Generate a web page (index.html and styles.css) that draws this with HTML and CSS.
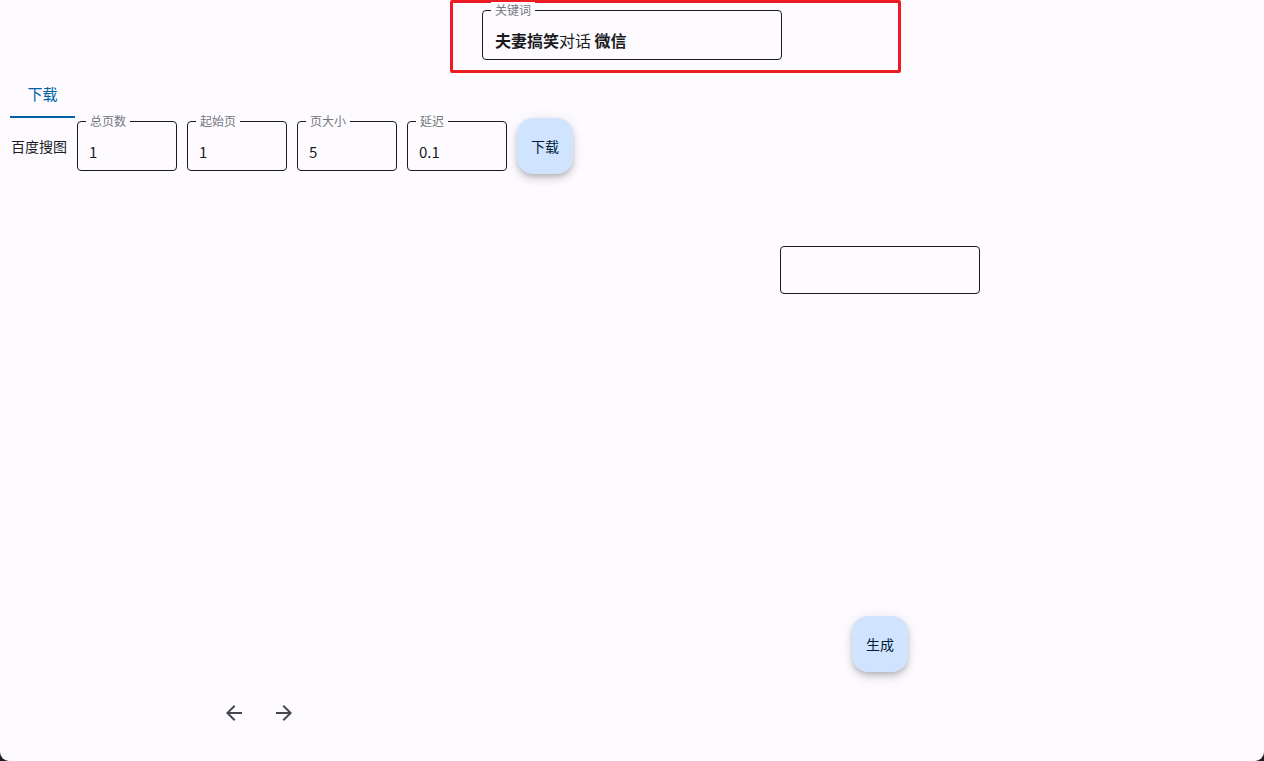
FILE: index.html
```html
<!DOCTYPE html>
<html lang="zh">
<head>
<meta charset="utf-8">
<title>下载</title>
<link rel="stylesheet" href="styles.css">
</head>
<body>
<div class="app">
  <header class="top">
    <div class="highlight">
      <div class="field field-keyword">
        <span class="field-label">关键词</span>
        <span class="field-value"><b>夫妻搞笑</b>对话 <b>微信</b></span>
      </div>
    </div>
  </header>
  <nav class="tabs">
    <div class="tab active">下载</div>
  </nav>
  <section class="row">
    <span class="row-label">百度搜图</span>
    <div class="field field-small">
      <span class="field-label">总页数</span>
      <span class="field-value">1</span>
    </div>
    <div class="field field-small">
      <span class="field-label">起始页</span>
      <span class="field-value">1</span>
    </div>
    <div class="field field-small">
      <span class="field-label">页大小</span>
      <span class="field-value">5</span>
    </div>
    <div class="field field-small">
      <span class="field-label">延迟</span>
      <span class="field-value">0.1</span>
    </div>
    <button class="fab fab-row">下载</button>
  </section>
  <div class="empty-wrap">
    <div class="field field-empty"></div>
  </div>
  <div class="gen-wrap">
    <button class="fab">生成</button>
  </div>
  <div class="nav-arrows">
    <svg class="arrow" viewBox="0 0 24 24" width="24" height="24"><path d="M20 11H7.83l5.59-5.59L12 4l-8 8 8 8 1.41-1.41L7.83 13H20v-2z"/></svg>
    <svg class="arrow" viewBox="0 0 24 24" width="24" height="24"><path d="M12 4l-1.41 1.41L16.17 11H4v2h12.17l-5.58 5.59L12 20l8-8z"/></svg>
  </div>
</div>
</body>
</html>
```

FILE: styles.css
```css
html {
  background: #1c1c1c;
  margin: 0;
  padding: 0;
}
body {
  margin: 0;
  font-family: "Noto Sans CJK SC", "Noto Sans", sans-serif;
  color: #1b1b1f;
}
.app {
  width: 1264px;
  height: 761px;
  background: #fdfbff;
  border-radius: 0 0 9px 9px;
  overflow: hidden;
  display: flex;
  flex-direction: column;
}
.top {
  height: 73px;
  display: flex;
}
.highlight {
  margin-left: 450px;
  width: 451px;
  height: 73px;
  box-sizing: border-box;
  border: 3px solid #ec1c24;
  border-radius: 2px;
  padding: 7px 0 0 29px;
}
.field {
  position: relative;
  box-sizing: border-box;
  border: 1px solid #1b1b1f;
  border-radius: 4px;
  background: transparent;
}
.field-label {
  position: absolute;
  top: -9px;
  left: 8px;
  padding: 0 4px;
  background: #fdfbff;
  font-size: 12px;
  line-height: 16px;
  color: #75777f;
}
.field-value {
  display: block;
  font-size: 15px;
  line-height: 18px;
  color: #1b1b1f;
}
.field-value b {
  font-weight: 600;
}
.field-keyword {
  width: 300px;
  height: 50px;
  padding: 18px 12px 0;
}
.field-keyword .field-value {
  font-size: 16px;
  line-height: 22px;
}
.tabs {
  display: flex;
  padding-left: 10px;
}
.tab {
  width: 65px;
  height: 45px;
  box-sizing: border-box;
  padding-top: 11px;
  text-align: center;
  font-size: 15px;
  line-height: 20px;
  color: #0061a4;
  border-bottom: 2px solid transparent;
}
.tab.active {
  border-bottom-color: #0061a4;
}
.row {
  display: flex;
  align-items: center;
  gap: 10px;
  height: 56px;
  padding-left: 11px;
}
.row-label {
  width: 56px;
  font-size: 14px;
  line-height: 18px;
  color: #1b1b1f;
}
.field-small {
  width: 100px;
  height: 50px;
  padding: 21px 11px 0;
}
.fab {
  width: 56px;
  height: 56px;
  border: none;
  border-radius: 16px;
  background: #d1e4ff;
  color: #001d36;
  font-family: "Noto Sans CJK SC", "Noto Sans", sans-serif;
  font-size: 14px;
  line-height: 18px;
  padding: 0;
  box-shadow: 0 3px 5px -1px rgba(0, 0, 0, 0.18), 0 6px 10px 0 rgba(0, 0, 0, 0.10), 0 1px 14px 0 rgba(0, 0, 0, 0.08);
}
.empty-wrap {
  margin-top: 72px;
  padding-left: 780px;
}
.field-empty {
  width: 200px;
  height: 48px;
}
.gen-wrap {
  margin-top: 322px;
  padding-left: 852px;
}
.nav-arrows {
  margin-top: 29px;
  padding-left: 222px;
  display: flex;
  gap: 26px;
}
.arrow {
  fill: #44474e;
}
```
